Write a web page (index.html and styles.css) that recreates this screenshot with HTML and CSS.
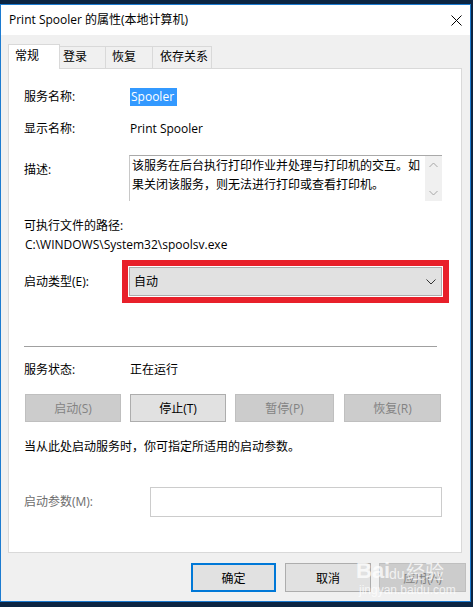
FILE: index.html
```html
<!DOCTYPE html>
<html lang="zh-CN">
<head>
<meta charset="utf-8">
<title>Print Spooler 的属性(本地计算机)</title>
<link rel="stylesheet" href="styles.css">
</head>
<body>
<div class="window">
  <div class="titlebar">
    <span class="title">Print Spooler 的属性(本地计算机)</span>
    <svg class="close" width="11" height="11" viewBox="0 0 11 11"><path d="M0.5 0.5 L10.5 10.5 M10.5 0.5 L0.5 10.5" stroke="#000" stroke-width="1" fill="none"/></svg>
  </div>
  <div class="client">
    <div class="tabs">
      <div class="tab active">常规</div>
      <div class="tab t-login">登录</div>
      <div class="tab t-recover">恢复</div>
      <div class="tab t-deps">依存关系</div>
    </div>
    <div class="panel">
      <div class="row r-name"><span class="label">服务名称:</span><span class="sel">Spooler</span></div>
      <div class="row r-display"><span class="label">显示名称:</span><span class="value">Print Spooler</span></div>
      <div class="row r-desc">
        <span class="label label-top">描述:</span>
        <div class="textarea">
          <div class="ta-text">该服务在后台执行打印作业并处理与打印机的交互。如<br>果关闭该服务，则无法进行打印或查看打印机。</div>
          <div class="scrollbar">
            <svg width="9" height="6" viewBox="0 0 9 6"><path d="M0.5 5 L4.5 1 L8.5 5" stroke="#a6a6a6" fill="none"/></svg>
            <svg width="9" height="6" viewBox="0 0 9 6"><path d="M0.5 1 L4.5 5 L8.5 1" stroke="#a6a6a6" fill="none"/></svg>
          </div>
        </div>
      </div>
      <div class="row r-pathlabel">可执行文件的路径:</div>
      <div class="row r-path">C:\WINDOWS\System32\spoolsv.exe</div>
      <div class="row r-type">
        <span class="label label-combo">启动类型(E):</span>
        <div class="combo">
          <span>自动</span>
          <svg width="10" height="6" viewBox="0 0 10 6"><path d="M0.5 0.5 L5 5 L9.5 0.5" stroke="#333" fill="none"/></svg>
        </div>
      </div>
      <div class="separator"></div>
      <div class="row r-status"><span class="label">服务状态:</span><span class="value">正在运行</span></div>
      <div class="btnrow">
        <div class="btn disabled b1">启动(S)</div>
        <div class="btn b2">停止(T)</div>
        <div class="btn disabled b3">暂停(P)</div>
        <div class="btn disabled b4">恢复(R)</div>
      </div>
      <div class="row r-hint">当从此处启动服务时，你可指定所适用的启动参数。</div>
      <div class="row r-params">
        <span class="label label-dis">启动参数(M):</span>
        <div class="input"></div>
      </div>
    </div>
    <div class="footer">
      <div class="btn fbtn ok">确定</div>
      <div class="btn fbtn cancel">取消</div>
      <div class="btn fbtn disabled apply">应用(A)</div>
    </div>
    <div class="watermark">
      <span class="wm-bai">Bai</span><span class="wm-paw">du</span><span class="wm-jy">经验</span>
      <span class="wm-url">jingyan.baidu.com</span>
    </div>
  </div>
</div>
</body>
</html>
```

FILE: styles.css
```css
html, body {
  margin: 0;
  padding: 0;
}
body {
  width: 473px;
  height: 607px;
  overflow: hidden;
  background: #0c2542;
  font-family: "Open Sans", "Noto Sans CJK SC", sans-serif;
  font-size: 12px;
  color: #000;
}
.window {
  margin-top: 4px;
  width: 471px;
  height: 598px;
  box-sizing: border-box;
  border: 1px solid #1c7bd0;
  display: flex;
  flex-direction: column;
  background: #f0f0f0;
}
.titlebar {
  height: 30px;
  flex: none;
  background: #fff;
  display: flex;
  align-items: center;
  padding-left: 8px;
}
.title {
  font-size: 12px;
  line-height: 18px;
}
.close {
  margin-left: auto;
  margin-right: 8px;
  margin-top: 0px;
}
.client {
  flex: 1;
  position: relative;
  padding: 9px 7px 0 7px;
  display: flex;
  flex-direction: column;
}
.tabs {
  display: flex;
  align-items: flex-end;
  height: 24px;
  position: relative;
  z-index: 1;
}
.tab {
  box-sizing: border-box;
  height: 22px;
  border: 1px solid #d9d9d9;
  border-bottom: none;
  background: #f0f0f0;
  margin-left: -1px;
  line-height: 20px;
  padding-left: 6px;
}
.tab.active {
  margin-left: 0;
  width: 52px;
  height: 25px;
  background: #fff;
  position: relative;
  z-index: 2;
  line-height: 22px;
  margin-bottom: -1px;
}
.t-login { width: 47px; padding-left: 3px; }
.t-recover { width: 48px; }
.t-deps { width: 60px; padding-left: 7px; }

.panel {
  box-sizing: border-box;
  width: 454px;
  height: 485px;
  background: #fff;
  border: 1px solid #d9d9d9;
  padding: 0 19px 0 15px;
  display: flex;
  flex-direction: column;
}
.row {
  display: flex;
  align-items: center;
  line-height: 18px;
  min-height: 18px;
}
.label {
  width: 106px;
  flex: none;
}
.value { padding-left: 0; }
.sel {
  background: #3399ff;
  color: #fff;
  height: 18px;
  line-height: 18px;
  padding: 0 1px 0 1px;
  width: 45px;
}
.r-name { margin-top: 19px; }
.r-display { margin-top: 14px; }
.r-desc { margin-top: 17px; align-items: flex-start; }
.label-top { width: 105px; margin-top: 6px; }
.textarea {
  box-sizing: border-box;
  width: 313px;
  height: 46px;
  border-top: 1px solid #a9a9a9;
  border-left: 1px solid #c8c8c8;
  display: flex;
}
.ta-text {
  flex: 1;
  padding: 0 0 0 2px;
  line-height: 19px;
  white-space: nowrap;
}
.scrollbar {
  width: 17px;
  background: #f0f0f0;
  display: flex;
  flex-direction: column;
  align-items: center;
  justify-content: space-between;
  padding: 6px 0 5px 0;
  box-sizing: border-box;
}
.r-pathlabel { margin-top: 16px; }
.r-path { margin-top: 1px; padding-left: 1px; }
.r-type { margin-top: 13px; }
.label-combo { width: 105px; }
.combo {
  box-sizing: border-box;
  width: 313px;
  height: 29px;
  background: #e1e1e1;
  border: 1px solid #adadad;
  outline: 6px solid #e8202a;
  outline-offset: 1px;
  display: flex;
  align-items: center;
  justify-content: space-between;
  padding: 0 5px 0 4px;
}
.separator {
  margin-top: 50px;
  height: 1px;
  background: #a0a0a0;
  margin-right: 5px;
}
.r-status { margin-top: 14px; }
.btnrow {
  display: flex;
  margin-top: 15px;
  margin-left: 1px;
}
.btn {
  box-sizing: border-box;
  height: 28px;
  background: #e1e1e1;
  border: 1px solid #adadad;
  display: flex;
  align-items: center;
  justify-content: center;
}
.btn.disabled {
  background: #cccccc;
  border-color: #bfbfbf;
  color: #838383;
}
.b1 { width: 96px; }
.b2 { width: 96px; margin-left: 9px; }
.b3 { width: 99px; margin-left: 9px; }
.b4 { width: 97px; margin-left: 10px; }
.r-hint { margin-top: 16px; }
.r-params { margin-top: 31px; }
.label-dis { color: #6d6d6d; width: 126px; }
.input {
  box-sizing: border-box;
  width: 292px;
  height: 30px;
  border: 1px solid #cccccc;
  background: #fff;
}
.footer {
  display: flex;
  justify-content: flex-end;
  margin-top: 10px;
  margin-right: -3px;
}
.fbtn { height: 29px; }
.ok { width: 85px; border: 2px solid #0078d7; }
.cancel { width: 86px; margin-left: 9px; }
.apply { width: 87px; margin-left: 8px; }

.watermark {
  position: absolute;
  left: 355px;
  top: 523px;
  width: 100px;
  height: 44px;
  color: rgba(255, 255, 255, 0.75);
  pointer-events: none;
}
.wm-bai {
  position: absolute;
  left: 0;
  top: 0;
  font-family: "Liberation Sans", sans-serif;
  font-size: 22px;
  font-weight: bold;
  line-height: 26px;
}
.wm-paw {
  position: absolute;
  left: 33px;
  top: 6px;
  font-family: "Liberation Sans", sans-serif;
  font-size: 14px;
  line-height: 20px;
}
.wm-jy {
  position: absolute;
  left: 50px;
  top: 2px;
  font-size: 19px;
  line-height: 24px;
}
.wm-url {
  position: absolute;
  left: 3px;
  top: 25px;
  font-family: "Liberation Sans", sans-serif;
  font-size: 12px;
  line-height: 14px;
}
```
